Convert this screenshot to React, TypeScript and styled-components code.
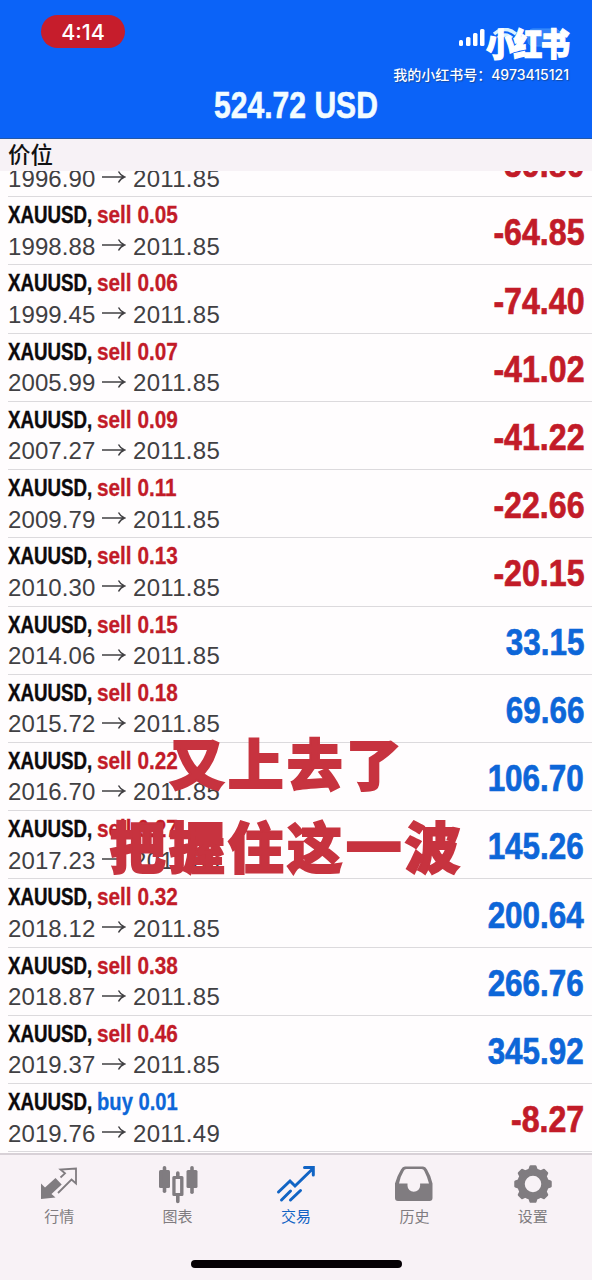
import React from "react";
import styled, { createGlobalStyle } from "styled-components";

const sans = `"Liberation Sans", "Noto Sans CJK SC", sans-serif`;
const cjk = `"Noto Sans CJK SC", sans-serif`;
const RED = "#c21b28";
const BLUE = "#0d66d8";

const GlobalStyle = createGlobalStyle`
  * { box-sizing: border-box; }
  body { margin: 0; background: #fffdfe; font-family: ${sans}; }
`;

const Screen = styled.div`
  position: relative;
  width: 592px;
  height: 1280px;
  display: flex;
  flex-direction: column;
  overflow: hidden;
  background: #fffdfe;
`;

const Header = styled.header`
  position: relative;
  height: 139px;
  flex: none;
  display: flex;
  flex-direction: column;
  padding-top: 15px;
  background: #0b63f8;
  border-bottom: 1px solid #2458a8;
`;

const Clock = styled.div`
  width: 84px;
  height: 33px;
  margin-left: 41px;
  border-radius: 17px;
  background: #c61d2c;
  color: #fff;
  font: 500 21.5px/35px Inter, sans-serif;
  text-align: center;
`;

const Balance = styled.h1`
  margin: 37px 0 0;
  height: 42px;
  font: bold 36px/42px ${sans};
  color: #f2fcff;
  -webkit-text-stroke: 0.6px #f2fcff;
  text-align: center;
  white-space: nowrap;
  transform: scaleX(0.835);
`;

const Watermark = styled.div`
  position: absolute;
  top: 24px;
  right: 23px;
  display: flex;
  flex-direction: column;
  align-items: flex-end;
  color: #fff;
`;

const LogoRow = styled.div`
  display: flex;
  height: 38px;
  align-items: flex-start;
`;

const Status = styled.svg`
  position: absolute;
  right: 0;
  top: 4px;
`;

const Logo = styled.span`
  position: relative;
  height: 38px;
  font: 900 32px/36px ${cjk};
  letter-spacing: -1.5px;
  -webkit-text-stroke: 1.3px #fff;
  transform: scaleX(0.9);
  transform-origin: right;
`;

const Account = styled.div`
  margin-top: 4px;
  font: 500 14px/18px Inter, ${cjk};
  white-space: nowrap;
  text-shadow: 1px 1px 1px #144aa5;
`;

const SectionBar = styled.div`
  height: 32px;
  flex: none;
  padding-left: 8px;
  background: #f7f2f6;
  font: 500 22.5px/29px ${cjk};
  color: #111;
`;

const Viewport = styled.main`
  flex: 1;
  min-height: 0;
  overflow: hidden;
`;

const List = styled.div`
  margin-top: -42px;
`;

const Row = styled.div`
  height: 68.23px;
  margin-left: 8px;
  padding-right: 8px;
  display: flex;
  justify-content: space-between;
  border-bottom: 1px solid #dcdadd;
`;

const Details = styled.div`
  display: flex;
  flex-direction: column;
  padding-top: 3px;
`;

const Deal = styled.div`
  display: flex;
  height: 29.5px;
  font: bold 24px/29px ${sans};
  color: #0c0a0c;
  white-space: nowrap;
`;

const Instrument = styled.span`
  width: 89px;
  -webkit-text-stroke: 0.4px currentColor;
  transform: scaleX(0.78);
  transform-origin: left;
`;

const Side = styled.span<{ $buy?: boolean }>`
  color: ${(p) => (p.$buy ? BLUE : RED)};
  -webkit-text-stroke: 0.3px currentColor;
  transform: scaleX(${(p) => (p.$buy ? 0.84 : 0.865)});
  transform-origin: left;
`;

const Prices = styled.div`
  display: flex;
  align-items: center;
  height: 33px;
  font: 24px/33px ${sans};
  color: #414043;
`;

const Quote = styled.span<{ $wide?: boolean }>`
  width: 88px;
  white-space: nowrap;
  letter-spacing: ${(p) => (p.$wide ? 0.3 : 0.1)}px;
`;

const Arrow = styled.svg`
  flex: none;
  margin: 0 7px 0 6px;
`;

const Profit = styled.div<{ $negative: boolean }>`
  align-self: center;
  padding-top: 5px;
  font: bold 36.5px/42px ${sans};
  color: ${(p) => (p.$negative ? RED : BLUE)};
  -webkit-text-stroke: 0.7px currentColor;
  transform: scaleX(${(p) => (p.$negative ? 0.88 : 0.86)});
  transform-origin: right;
`;

const Caption = styled.div`
  position: absolute;
  top: 720px;
  left: 107px;
  width: 357px;
  font: 900 55px/83px ${cjk};
  letter-spacing: 3.5px;
  color: #c7333f;
  -webkit-text-stroke: 2px #c7333f;
  text-align: center;
  white-space: nowrap;
  transform: scaleX(1.008);
  transform-origin: left;
`;

const TabBar = styled.nav`
  height: 127px;
  flex: none;
  display: grid;
  grid-template-columns: repeat(5, 1fr);
  grid-template-rows: 105px 8px;
  background: #f8f2f6;
  border-top: 2px solid #d8d1d7;
`;

const Tab = styled.div<{ $active?: boolean }>`
  display: flex;
  flex-direction: column;
  align-items: center;
  padding-top: 7px;
  color: ${(p) => (p.$active ? "#1164c4" : "#807c80")};
`;

const TabLabel = styled.span`
  margin-top: 1px;
  font: 400 15px/22px ${cjk};
`;

const HomeIndicator = styled.div`
  grid-column: 1 / -1;
  justify-self: center;
  width: 211px;
  height: 8px;
  border-radius: 4px;
  background: #050004;
`;

const positions: [string, string, string, string?, string?][] = [
  ["0.04", "1996.90", "-59.80"],
  ["0.05", "1998.88", "-64.85"],
  ["0.06", "1999.45", "-74.40"],
  ["0.07", "2005.99", "-41.02"],
  ["0.09", "2007.27", "-41.22"],
  ["0.11", "2009.79", "-22.66"],
  ["0.13", "2010.30", "-20.15"],
  ["0.15", "2014.06", "33.15"],
  ["0.18", "2015.72", "69.66"],
  ["0.22", "2016.70", "106.70"],
  ["0.27", "2017.23", "145.26"],
  ["0.32", "2018.12", "200.64"],
  ["0.38", "2018.87", "266.76"],
  ["0.46", "2019.37", "345.92"],
  ["0.01", "2019.76", "-8.27", "2011.49", "buy"],
];

const QuotesIcon = () => (
  <svg width="40" height="42" viewBox="0 0 40 42" fill="none">
    <path d="M2 21.5l4 4L16.5 16l6.2 6.5L12.5 32l4 3.5L2 37z" fill="currentColor" />
    <path d="M19 31L32.5 17.5l4.500 4V6.500L21.500 7.500l4.500 3.800-4.500 4.200" stroke="currentColor" strokeWidth="1.8" />
  </svg>
);

const ChartIcon = () => (
  <svg width="40" height="42" viewBox="0 0 40 42" fill="currentColor">
    <rect x="1" y="8" width="11" height="18" rx="1.5" />
    <rect x="4.700" y="4" width="3.600" height="27" rx="1.800" />
    <rect x="28.500" y="8" width="11" height="18" rx="1.500" />
    <rect x="32.200" y="4" width="3.600" height="28" rx="1.800" />
    <path fillRule="evenodd" d="M18 14V11a1.800 1.800 0 013.600 0v3h2.400a1.500 1.500 0 011.500 1.500v17a1.500 1.500 0 01-1.500 1.500h-2.400v5.500a1.800 1.800 0 01-3.600 0v-5.500h-2.200a1.500 1.500 0 01-1.500-1.500v-17a1.500 1.500 0 011.500-1.500zM17.600 17v14h4.500V17z" />
  </svg>
);

const TradeIcon = () => (
  <svg width="40" height="42" viewBox="0 0 40 42" fill="none" stroke="currentColor" strokeWidth="3" strokeLinecap="round">
    <path d="M2.500 30L14 19l5 5L37 6.500M28.500 5.500H37.300V13M5.500 38l9-9M14.500 38l10-9.500" />
  </svg>
);

const HistoryIcon = () => (
  <svg width="40" height="42" viewBox="0 0 40 42" fill="currentColor" fillRule="evenodd">
    <path d="M7 7.500Q8.500 4.500 11 4.500H29Q31.500 4.500 33 7.500Q37 14 38.500 21.500V36a3 3 0 01-3 3H4a3 3 0 01-3-3V21.500Q3 14 7 7.500zM9.700 9Q6.500 14 5 21.500h8.500v2.200a6.300 6 0 0012.600 0v-2.200H35Q33 14 30.300 9Q29.500 7 27.500 7h-15Q10.500 7 9.700 9z" />
  </svg>
);

const SettingsIcon = () => (
  <svg width="40" height="42" viewBox="0 0 40 42" fill="none" stroke="currentColor">
    <circle cx="20" cy="22" r="12" strokeWidth="7.5" />
    {[0, 45, 90, 135, 180, 225, 270, 315].map((a) => (
      <path key={a} d="M16 9.500L17.700 4.500h4.600l1.700 5z" fill="currentColor" strokeWidth="2.500" strokeLinejoin="round" transform={`rotate(${a} 20 22)`} />
    ))}
  </svg>
);

const tabs = [
  { label: "行情", Icon: QuotesIcon },
  { label: "图表", Icon: ChartIcon },
  { label: "交易", Icon: TradeIcon },
  { label: "历史", Icon: HistoryIcon },
  { label: "设置", Icon: SettingsIcon },
];

export default function App() {
  return (
    <Screen>
      <GlobalStyle />
      <Header>
        <Clock>4:14</Clock>
        <Balance>524.72 USD</Balance>
        <Watermark>
          <LogoRow>
            <Status width="112" height="28" viewBox="0 0 112 28" fill="#fff">
              <rect x="2" y="12" width="4" height="6" rx="1.5" />
              <rect x="9" y="9" width="4.500" height="9" rx="1.500" />
              <rect x="16" y="5" width="4.500" height="13" rx="1.500" />
              <rect x="23" y="1" width="4.500" height="17" rx="1.500" />
              <path d="M37 6Q48-3 59 6M41 10q7-6 14 0" fill="none" stroke="#d8f2ff" strokeWidth="3.500" />
              <rect x="71" y="1" width="32" height="17" rx="5" fill="#d8f1ff" fillOpacity=".2" stroke="#3f94fb" />
              <rect x="105" y="6" width="2" height="6" rx="1" fill="#72b5fb" />
            </Status>
            <Logo>小红书</Logo>
          </LogoRow>
          <Account>我的小红书号：4973415121</Account>
        </Watermark>
      </Header>
      <SectionBar>价位</SectionBar>
      <Viewport>
        <List>
          {positions.map(([volume, open, profit, current = "2011.85", side = "sell"]) => (
            <Row key={open}>
              <Details>
                <Deal>
                  <Instrument>XAUUSD,</Instrument>
                  <Side $buy={side === "buy"}>{side} {volume}</Side>
                </Deal>
                <Prices>
                  <Quote>{open}</Quote>
                  <Arrow width="24" height="16" viewBox="0 0 24 16" fill="none" stroke="currentColor" strokeWidth="1.5">
                    <path d="M0 7h22.500M16.500 1.500q2 4 6 5.500-4 1.500-6 5.500" />
                  </Arrow>
                  <Quote $wide>{current}</Quote>
                </Prices>
              </Details>
              <Profit $negative={profit.startsWith("-")}>{profit}</Profit>
            </Row>
          ))}
        </List>
      </Viewport>
      <TabBar>
        {tabs.map(({ label, Icon }, i) => (
          <Tab key={label} $active={i === 2}>
            <Icon />
            <TabLabel>{label}</TabLabel>
          </Tab>
        ))}
        <HomeIndicator />
      </TabBar>
      <Caption>
        又上去了
        <br />
        把握住这一波
      </Caption>
    </Screen>
  );
}
